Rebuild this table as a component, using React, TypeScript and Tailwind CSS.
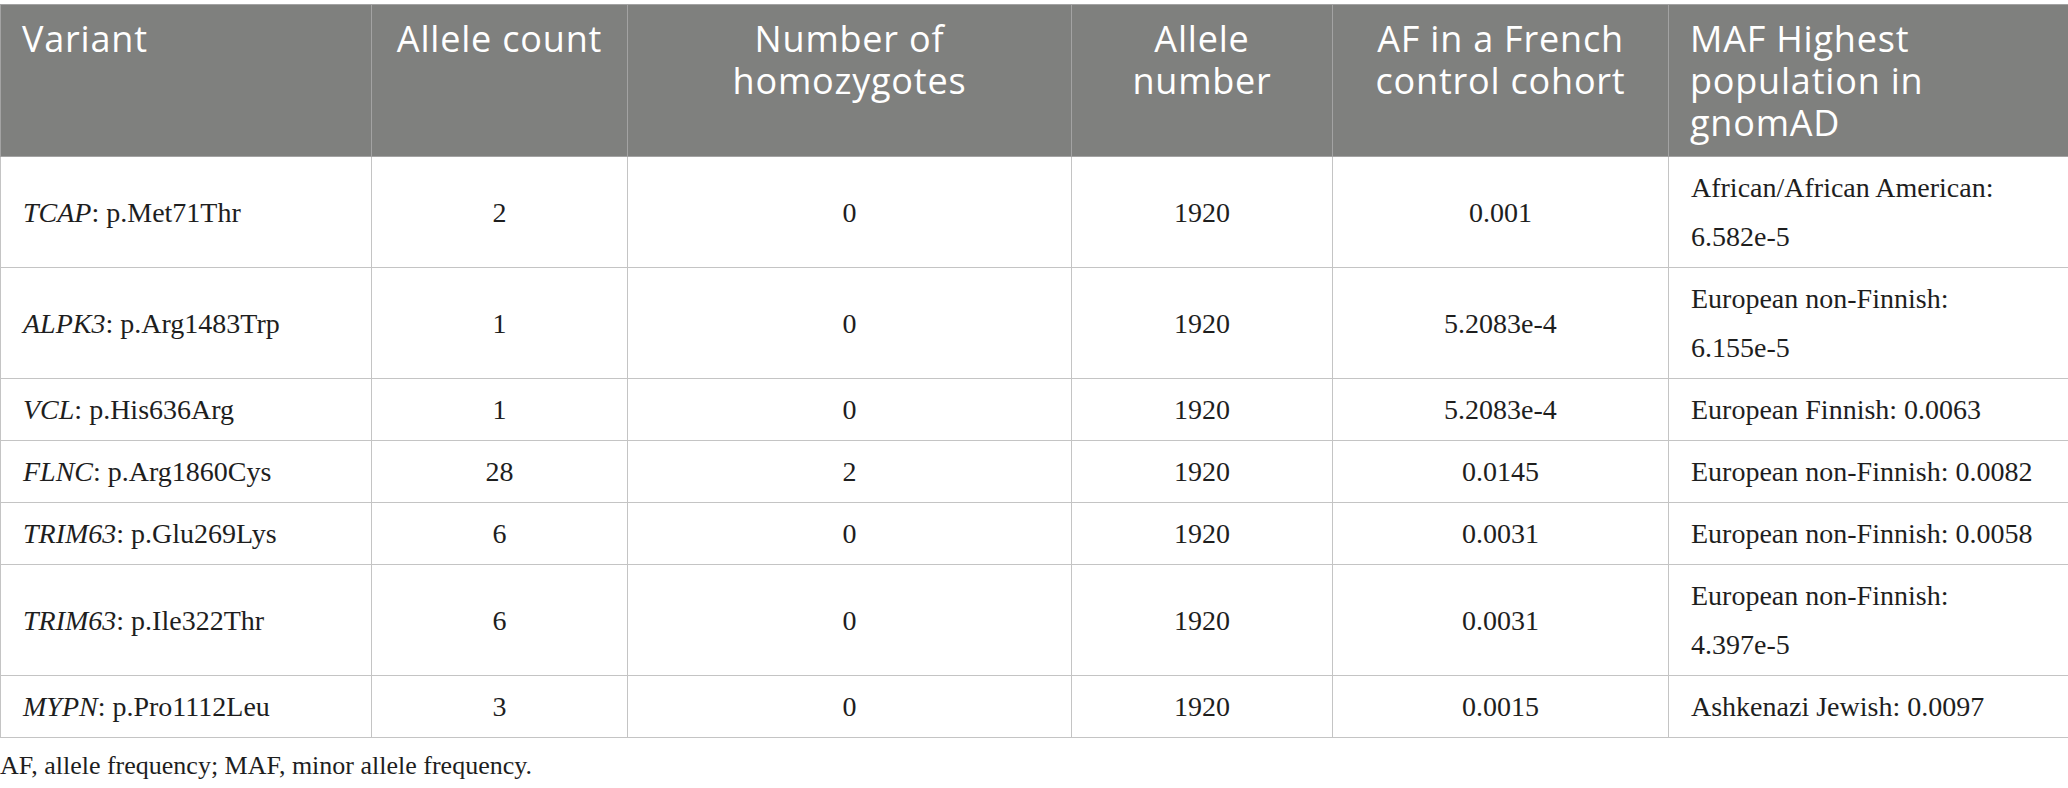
const rows: { gene: string; change: string; count: string; homo: string; num: string; af: string; maf: string[] }[] = [
  { gene: 'TCAP', change: 'p.Met71Thr', count: '2', homo: '0', num: '1920', af: '0.001', maf: ['African/African American:', '6.582e-5'] },
  { gene: 'ALPK3', change: 'p.Arg1483Trp', count: '1', homo: '0', num: '1920', af: '5.2083e-4', maf: ['European non-Finnish:', '6.155e-5'] },
  { gene: 'VCL', change: 'p.His636Arg', count: '1', homo: '0', num: '1920', af: '5.2083e-4', maf: ['European Finnish: 0.0063'] },
  { gene: 'FLNC', change: 'p.Arg1860Cys', count: '28', homo: '2', num: '1920', af: '0.0145', maf: ['European non-Finnish: 0.0082'] },
  { gene: 'TRIM63', change: 'p.Glu269Lys', count: '6', homo: '0', num: '1920', af: '0.0031', maf: ['European non-Finnish: 0.0058'] },
  { gene: 'TRIM63', change: 'p.Ile322Thr', count: '6', homo: '0', num: '1920', af: '0.0031', maf: ['European non-Finnish:', '4.397e-5'] },
  { gene: 'MYPN', change: 'p.Pro1112Leu', count: '3', homo: '0', num: '1920', af: '0.0015', maf: ['Ashkenazi Jewish: 0.0097'] },
]

const th = 'border border-[#a3a3a3] px-[21px] pt-[13px] pb-[10px] align-top font-normal text-[36px] leading-[42px] tracking-[0.8px] text-white'
const td = 'border border-[#c4c4c4] px-[22px] py-[6px] align-middle text-[28px] leading-[49px] text-[#1e1e1e]'

export default function App() {
  return (
    <div className="w-[2068px] h-[788px] bg-white pt-[4px] overflow-hidden">
      <table className="w-[2068px] table-fixed border-collapse font-['Liberation_Serif',serif]">
        <colgroup>
          <col className="w-[371px]" />
          <col className="w-[256px]" />
          <col className="w-[444px]" />
          <col className="w-[261px]" />
          <col className="w-[336px]" />
          <col className="w-[400px]" />
        </colgroup>
        <thead>
          <tr className="h-[152px] bg-[#7f807e] font-['Open_Sans',sans-serif]">
            <th className={`${th} text-left`}>Variant</th>
            <th className={`${th} text-center`}>Allele count</th>
            <th className={`${th} text-center`}>Number of<br />homozygotes</th>
            <th className={`${th} text-center`}>Allele<br />number</th>
            <th className={`${th} text-center`}>AF in a French<br />control cohort</th>
            <th className={`${th} text-left`}>MAF Highest<br />population in<br />gnomAD</th>
          </tr>
        </thead>
        <tbody>
          {rows.map((r, i) => (
            <tr key={i}>
              <td className={`${td} text-left`}>
                <i>{r.gene}</i>: {r.change}
              </td>
              <td className={`${td} text-center`}>{r.count}</td>
              <td className={`${td} text-center`}>{r.homo}</td>
              <td className={`${td} text-center`}>{r.num}</td>
              <td className={`${td} text-center`}>{r.af}</td>
              <td className={`${td} text-left`}>
                {r.maf.map((m, j) => (
                  <div key={j}>{m}</div>
                ))}
              </td>
            </tr>
          ))}
        </tbody>
      </table>
      <p className="mt-[10px] font-['Liberation_Serif',serif] text-[26px] leading-[36px] text-[#1e1e1e]">
        AF, allele frequency; MAF, minor allele frequency.
      </p>
    </div>
  )
}
